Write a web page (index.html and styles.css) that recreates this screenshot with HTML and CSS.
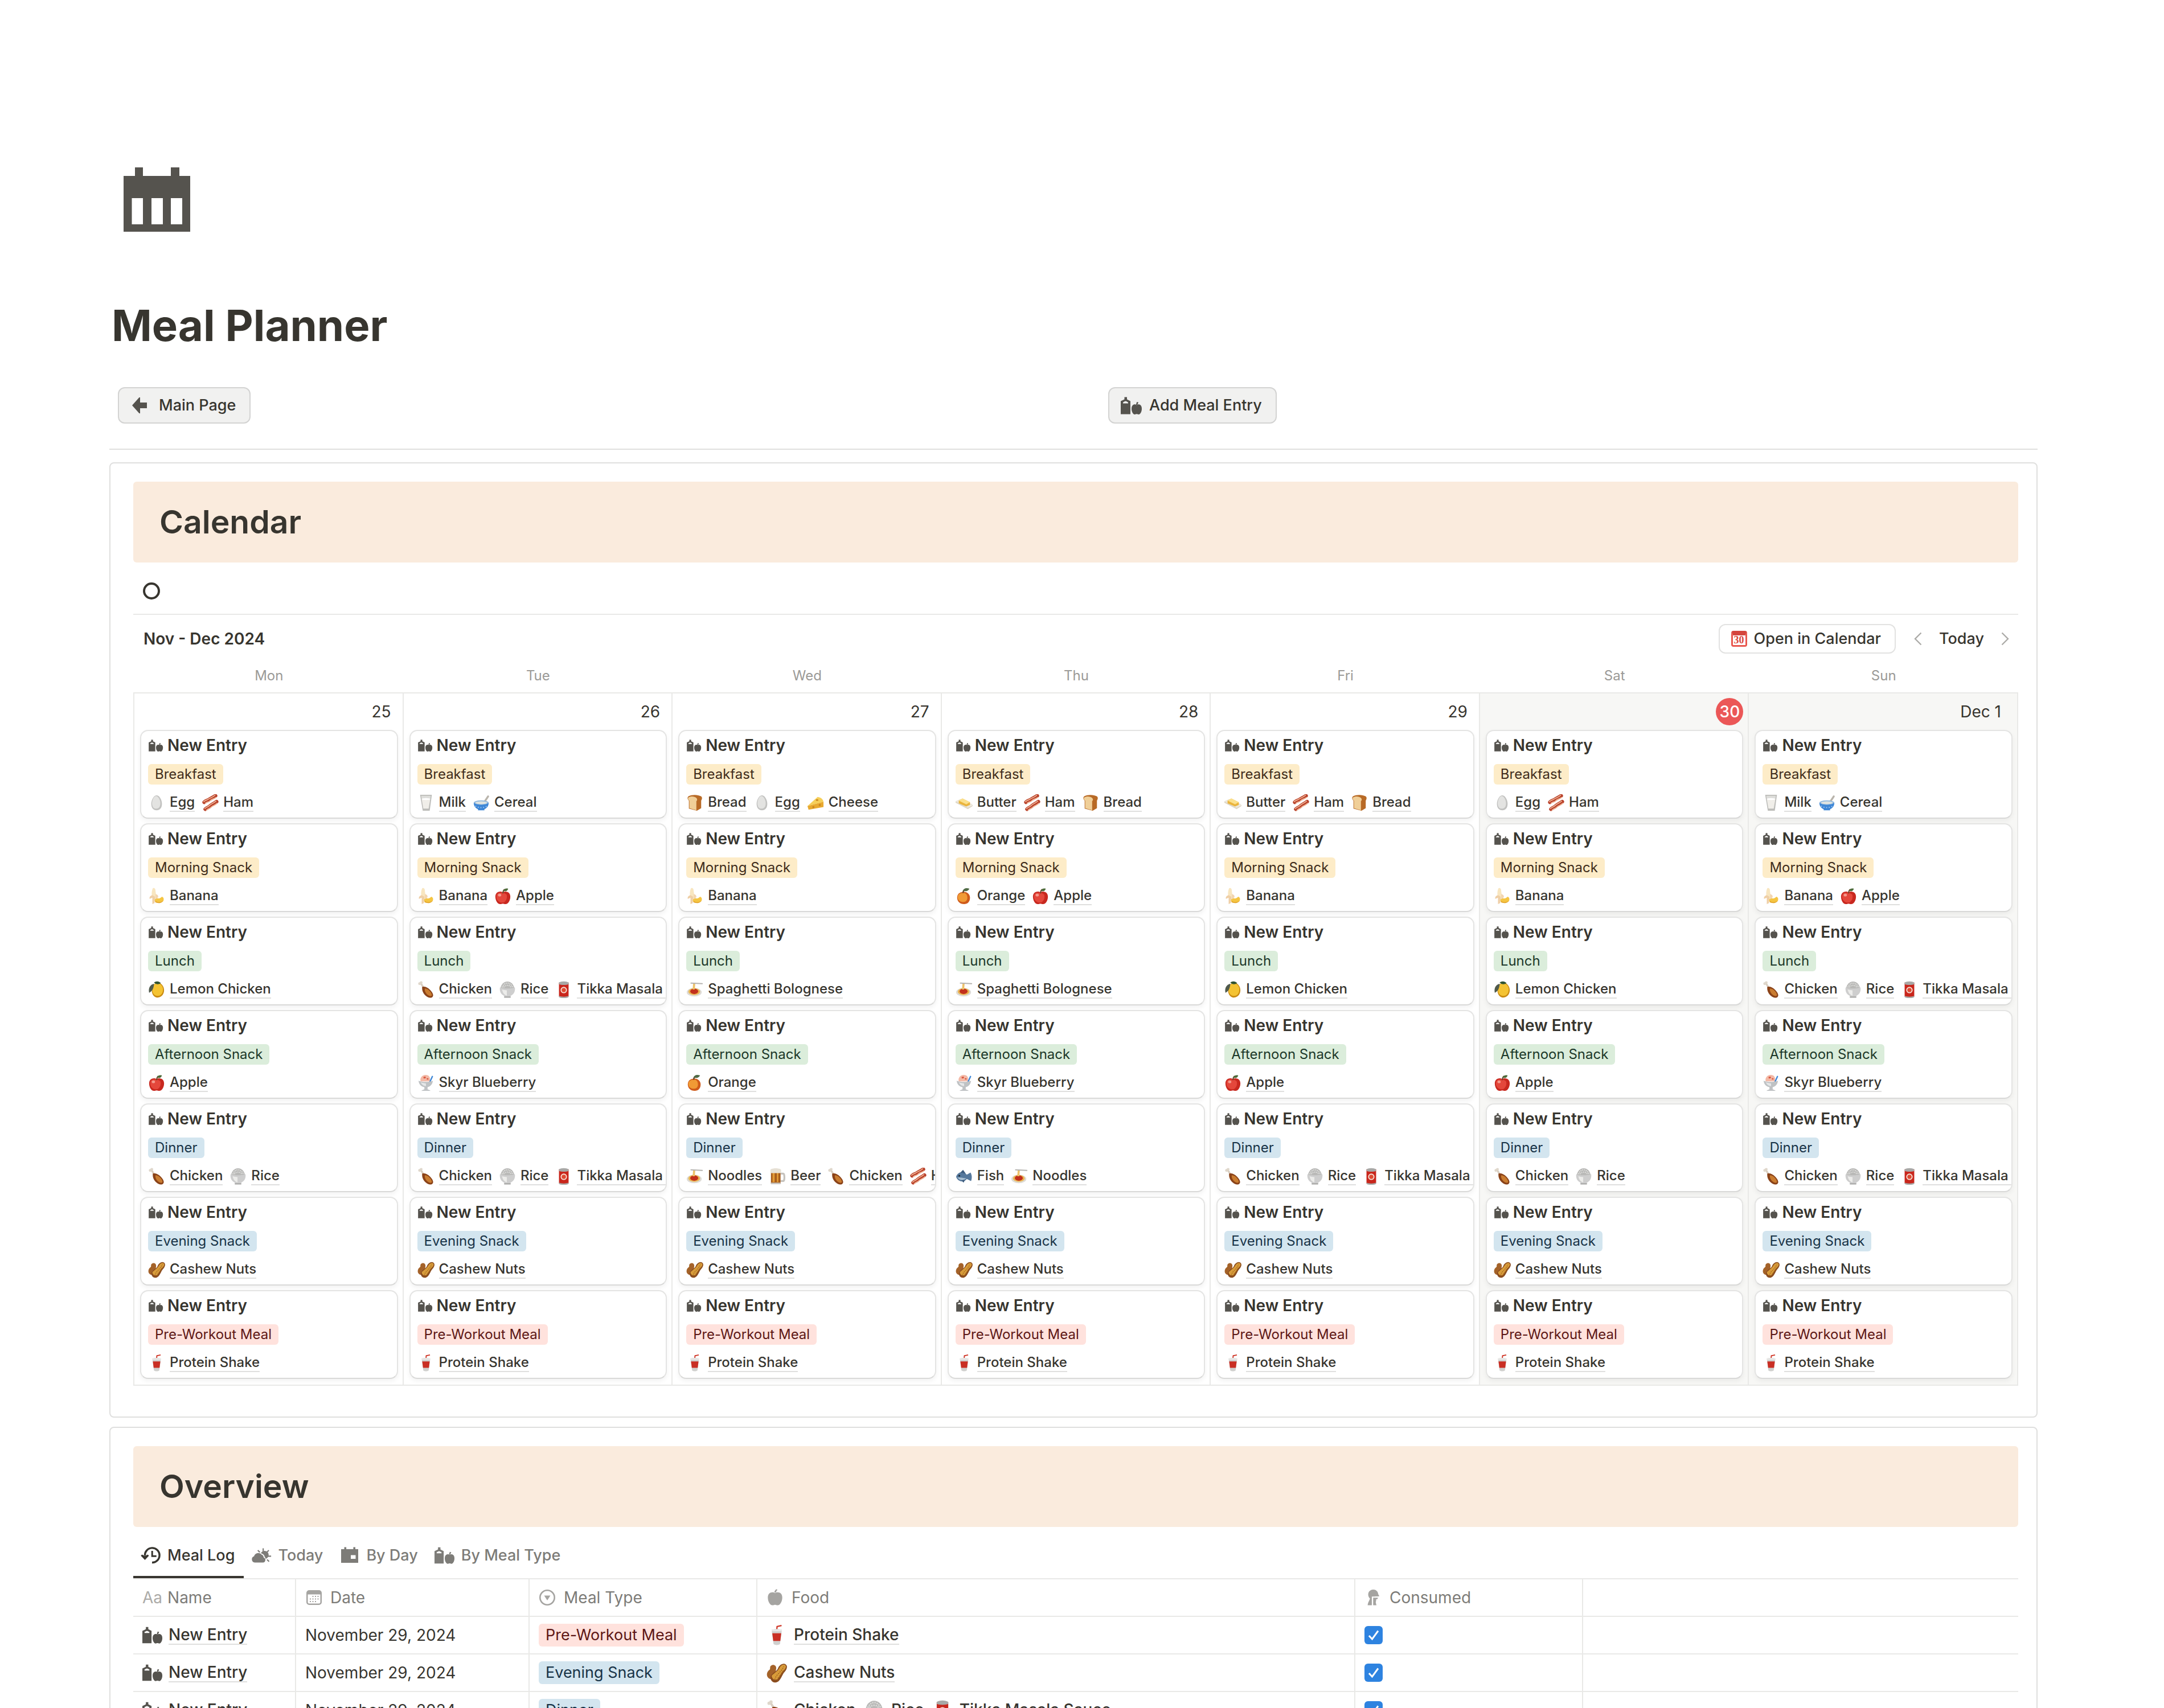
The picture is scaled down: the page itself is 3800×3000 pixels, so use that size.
FILE: index.html
```html
<!DOCTYPE html>
<html lang="en">
<head>
<meta charset="utf-8">
<title>Meal Planner</title>
<link rel="stylesheet" href="styles.css">
</head>
<body>
<svg class="sprite" aria-hidden="true">
  <symbol id="meal" viewBox="0 0 38 31"><path fill="currentColor" fill-rule="evenodd" d="M6.500 0.500h4.500v4l6 3V30.500H0V7.500l6.500-3zM4 11.500h9V9.800L9.500 7.800h-2L4 9.800z"/><path fill="currentColor" d="M28 14.500c-2-1.500-3.600-1.400-5-.9-2.800 1-4 3.600-4 7.400 0 5.300 2.800 10 5.600 10 1.500 0 2.200-.7 3.400-.7s1.900.7 3.400.7C34.200 31 37 26.300 37 21c0-3.800-1.200-6.400-4-7.400-1.400-.5-3-.6-5 .9zM26.800 14l1.500-5 2.800.8L29 14z"/></symbol>
  <symbol id="apple-solid" viewBox="0 0 28 32"><path fill="currentColor" d="M14 7.500c-3-1.800-5.600-1.800-8-.9C2.200 8 .5 11.500.5 16c0 7 4 14.500 8.500 14.500 2.200 0 3-.8 5-.8s2.800.8 5 .8c4.500 0 8.500-7.500 8.500-14.500 0-4.500-1.700-8-5.500-9.400-2.400-.9-5-.9-8 .9zM12.600 6.500C13 3.500 14.400 1.300 16.800.2l1.800 1.700C16.800 3 16 4.500 15.800 6.500z"/></symbol>
  <symbol id="back" viewBox="0 0 30 28"><path fill="currentColor" d="M2 14L14.500 0H16v9h12v10H16v9h-1.500z"/></symbol>
  <symbol id="history" viewBox="0 0 36 30"><g fill="none" stroke="currentColor" stroke-width="3.400"><path d="M7.500 15.500A12.800 12.800 0 1 1 20 27.500"/><path stroke-width="3" d="M20.200 7v9.300h7.500"/></g><path fill="currentColor" d="M.3 15.500l2-2 5.200 2.500 5-2.500 2 2L7.500 23z"/></symbol>
  <symbol id="sun-cloud" viewBox="0 0 40 30"><path fill="currentColor" d="M7 29a6.300 6.300 0 0 1-1.300-12.200 8.500 8.500 0 0 1 15-3.200 6.200 6.200 0 0 1 3.700 5.700A5 5 0 0 1 23 29zM19 10.500a8 8 0 1 1 9.300 11.300 7 7 0 0 0-2-4.300c-.4-3-2.800-5.600-7.300-7z"/><path stroke="currentColor" stroke-width="2.400" d="M23.500 1v6M13 5l4 4M34.500 5l-4.500 4.500M33 16.500h6M31 23l4 4"/></symbol>
  <symbol id="day" viewBox="0 0 36 30"><path fill="currentColor" fill-rule="evenodd" d="M3 4h5.500V.5h3.600V4h12.300V.5H28V4h5v24H3zm17 10.500v6.500h8.500v-6.500z"/></symbol>
  <symbol id="date" viewBox="0 0 30 28"><path fill="currentColor" fill-rule="evenodd" d="M7 1h17a5 5 0 0 1 5 5v16a5 5 0 0 1-5 5H7a5 5 0 0 1-5-5V6a5 5 0 0 1 5-5zM4.500 8.500V22A2.500 2.500 0 0 0 7 24.500h17a2.500 2.500 0 0 0 2.500-2.500V8.500z"/><path stroke="currentColor" stroke-width="2" stroke-dasharray="2 2.500" d="M12.500 12h12M8 16.500h16.500M8 21h11.500"/></symbol>
  <symbol id="select" viewBox="0 0 30 28"><circle cx="15" cy="14" r="12.700" fill="none" stroke="currentColor" stroke-width="2.600"/><path fill="currentColor" d="M9.500 10.500h11L15 19z"/></symbol>
  <symbol id="person" viewBox="0 0 32 32"><path fill="currentColor" d="M16.500 1C10.500 1 7 5.400 7 10.300c0 3 1.200 5.300 3.200 7.300C10 21.500 6.500 24 6 30.500h7.800V14.200c1.700-.2 4.500-.2 11.400-.4l2.800-.4-2.200-3.600C25.500 5 22 1 16.500 1z"/><path fill="currentColor" d="M16.300 16.300h9l-.8 2.300-2.700.8v3c-1.500 2.600.2 5 .7 8.100h-6.200z"/></symbol>

  <symbol id="egg" viewBox="0 0 32 32"><path fill="#c2c2c0" d="M16 2c5 0 10 8 10 16 0 7.500-4 12-10 12S6 25.500 6 18C6 10 11 2 16 2z"/><path fill="#e3e3e1" d="M15 3.500c4 0 8 7 8 13.500S20 27 15 27s-7.500-4-7.500-10S11 3.500 15 3.500z"/></symbol>
  <symbol id="bacon" viewBox="0 0 32 32"><g fill="none" stroke-linecap="round"><path stroke="#b8402a" stroke-width="7" d="M5 15c4-4 5-2 9-5s6-3 12-7"/><path stroke="#f0b596" stroke-width="1.800" d="M4 14c4-4 5-2 9-5s6-2 12-7M7 17c4-4 5-1 9-5s6-2 11-6"/><path stroke="#b8402a" stroke-width="7" d="M7 28c4-4 5-2 9-6s6-3 12-8"/><path stroke="#f0b596" stroke-width="1.800" d="M6 27c4-4 5-2 9-6s6-3 12-8M9 30c4-4 5-2 9-6s6-2 11-7"/></g></symbol>
  <symbol id="banana" viewBox="0 0 32 32"><path fill="#f5c542" d="M14 17c4 5 8 4 12 0 3 1 4 4 3 7-3 5-12 6-17 1z"/><path fill="#e3a52c" d="M14 25c5 4 12 2 15-1-2 5-10 7-16 3z"/><path fill="#f8e6c0" d="M9 1c4-1 5 2 5 6l2 13-6 3C6 16 6 7 9 1z"/><path fill="#efcfa6" d="M8 14c-4 1-6 4-5 7l5-2v12l4-2 1-12z"/><path fill="#f2d5b0" d="M14 12c4 1 5 3 5 6l-5 4z"/></symbol>
  <symbol id="apple" viewBox="0 0 32 32"><path fill="#c8281f" d="M16 9c-3-2-6-2-8-1-4 1-6 5-6 9 0 7 4 14 9 14 2 0 3-1 5-1s3 1 5 1c5 0 9-7 9-14 0-4-2-8-6-9-2-1-5-1-8 1z"/><path fill="#e4473b" d="M8 10c4-1 12 0 15 3 2 6-1 13-6 15-7 1-13-4-13-11 0-4 1-6 4-7z"/><ellipse cx="10" cy="14" rx="3" ry="2.500" fill="#f49a8c"/><path fill="none" stroke="#6b4226" stroke-width="2" d="M16 11c0-4 1-6 3-8"/><path fill="#4c6b3a" d="M17 6c1-4 5-5 9-4-1 4-5 6-9 4z"/></symbol>
  <symbol id="lemon" viewBox="0 0 32 32"><path fill="#c98a12" d="M15 4c8-3 15 5 15 13 0 7-4 13-11 14-6 1-12-5-12-13 0-6 3-12 8-14z"/><path fill="#f4c332" d="M15 5c7-2 13 4 13 11s-4 12-10 12S8 23 8 17c0-6 2-10 7-12z"/><path fill="#505a4c" d="M11 5C4 7 0 13 2 22c5-2 9-8 9-17z"/><path fill="#2f5230" d="M11 3c4-3 9-3 13 1-4 3-9 3-13-1z"/></symbol>
  <symbol id="chicken" viewBox="0 0 32 32"><path fill="none" stroke="#d9cfc2" stroke-width="3.500" stroke-linecap="round" d="M6 4l6 9"/><circle cx="4" cy="5" r="2.600" fill="#dfd7cb"/><circle cx="7" cy="3" r="2.600" fill="#dfd7cb"/><path fill="#8a4218" d="M9 11c5-1 10 1 15 6s7 10 4 13c-3 3-9 1-12-2-5-4-8-10-7-17z"/><path fill="#c97c30" d="M14 14c4 0 8 3 10 6 3 4 4 7 2 8s-7-1-9-4-4-6-3-10z"/></symbol>
  <symbol id="rice" viewBox="0 0 32 32"><path fill="#b9b9b7" d="M3 16C3 7 9 1 16 1s13 6 13 15z"/><path fill="none" stroke="#dededc" stroke-width="2.200" stroke-dasharray="2 1.500" d="M6 12c3-6 6-8 10-8s8 3 10 8M9 12c3-5 11-5 14 0"/><path fill="#cecece" d="M2 12c7 3 21 3 28 0 1 8-2 13-8 16v3H10v-3C4 25 1 20 2 12z"/><path fill="#ececea" d="M6 16c3 1 6 1.500 9 1.500v10C10 26 7 22 6 16z"/><path fill="#a9a9a7" d="M10 29h12v2.500H10z"/></symbol>
  <symbol id="can" viewBox="0 0 32 32"><path fill="#c9261c" d="M7 3h18v26c-4 3-14 3-18 0z"/><path fill="#a8a8a6" d="M7 3c4-3 14-3 18 0v3c-4 2-14 2-18 0zM7 28c4 2 14 2 18 0v2c-4 3-14 3-18 0z"/><circle cx="16" cy="17" r="6" fill="#f6e3d8"/><circle cx="16" cy="17" r="4" fill="#dd4a32"/></symbol>
  <symbol id="milk" viewBox="0 0 32 32"><path fill="#bcbcb9" d="M5 1h22l-4 30H10z"/><path fill="#dededb" d="M7 3h18l-1 6H8z"/><path fill="#f0eee9" d="M8 9h16l-3 18H11z"/><ellipse cx="16" cy="9" rx="8" ry="1.800" fill="#fff"/></symbol>
  <symbol id="cereal" viewBox="0 0 32 32"><path stroke="#b9b4ab" stroke-width="3.500" stroke-linecap="round" d="M29 4l-8 12"/><ellipse cx="16" cy="16" rx="14" ry="4.500" fill="#8fb7dd"/><ellipse cx="16" cy="16" rx="11" ry="2.800" fill="#dfe3e0"/><path fill="#3d86d6" d="M2 16c5 5 23 5 28 0 0 6-3 10-8 12v2H10v-2C5 26 2 22 2 16z"/><path stroke="#9cc4ee" stroke-width="2" stroke-dasharray="2 3" fill="none" d="M5 22c6 4 16 4 22 0"/></symbol>
  <symbol id="bread" viewBox="0 0 32 32"><path fill="#b86a26" d="M4 4c8-4 18-3 24 0 3 3 1 6 0 8v14l-8 5L5 27V12C2 9 2 6 4 4z"/><path fill="#f0cf98" d="M4 6c5-3 12-2 15 1 2 2 2 5 0 6v17L6 26V12C3 10 3 8 4 6z"/></symbol>
  <symbol id="cheese" viewBox="0 0 32 32"><path fill="#f6cf58" d="M1 22L20 5c6 1 10 4 11 9z"/><path fill="#e8a92f" d="M1 22l30-8v10L3 29z"/><g fill="#c98620"><ellipse cx="19" cy="11" rx="2.500" ry="1.600"/><circle cx="12" cy="24" r="2"/><circle cx="24" cy="20" r="2"/></g></symbol>
  <symbol id="butter" viewBox="0 0 32 32"><path fill="#ded7c7" d="M0 13l23 12 9-5v2l-9 6L0 16z"/><path fill="#ece7db" d="M0 13l9-4 23 10-9 6z"/><path fill="#eab43c" d="M6 12l7-4 14 7v5l-7 3-14-6z"/><path fill="#fbe08c" d="M6 12l7-4 14 7-7 4z"/></symbol>
  <symbol id="orange" viewBox="0 0 32 32"><path fill="#cf5b1a" d="M14 8c7-1 13 4 13 11 0 8-5 12-11 12C8 31 3 26 3 19S7 9 14 8z"/><path fill="#f09a35" d="M13 10c6-1 9 3 9 9 0 5-3 8-7 8-7 0-11-4-11-9s4-8 9-8z"/><path fill="none" stroke="#6b4226" stroke-width="2.500" d="M14 10c0-3 1-5 3-6"/><path fill="#4f6a45" d="M14 6c1-5 6-6 12-4-2 4-7 6-12 4z"/></symbol>
  <symbol id="spaghetti" viewBox="0 0 32 32"><ellipse cx="15" cy="21" rx="14" ry="8" fill="#dedbd5"/><ellipse cx="15" cy="20" rx="11" ry="6.500" fill="#eab652"/><ellipse cx="15" cy="19.500" rx="7.500" ry="5" fill="#c2301c"/><path fill="#edc26a" d="M13 4h4l-1 12h-4z"/><path stroke="#b5b3af" stroke-width="2.200" stroke-linecap="round" d="M9 4l21 1"/></symbol>
  <symbol id="sundae" viewBox="0 0 32 32"><path fill="#f3b9a6" d="M6 13C4 7 9 1 15 1c7 0 10 5 8 12z"/><path fill="#d9573f" d="M11 5l4-1 1 3-4 1zM18 7l3 1-1 2-3-1z"/><path stroke="#3f87d6" stroke-width="2.500" stroke-linecap="round" d="M28 4l-5 11"/><path fill="#bfc2c4" d="M2 12c8 3 19 3 27 0-1 7-5 11-10 12v4l5 2v1H8v-1l5-2v-4C7 23 3 19 2 12z"/><path fill="#e4e6e7" d="M6 15c4 1 8 2 10 2v5c-5 0-8-3-10-7z"/></symbol>
  <symbol id="beer" viewBox="0 0 32 32"><path fill="none" stroke="#c5c2bd" stroke-width="3.500" d="M22 11h5c3 0 3 14 0 14h-5"/><path fill="#a65c1b" d="M4 7h18v23H4z"/><path fill="#e29a35" d="M7 9h4v18H7zM15 9h3v18h-3z"/><path fill="#e6e0d4" d="M3 4c2-4 18-4 20 0v6H3z"/><path fill="#c9c6c1" d="M4 28h18v3H4z"/></symbol>
  <symbol id="fish" viewBox="0 0 32 32"><path fill="#55789c" d="M1 17C4 8 14 5 21 13l7-4c3 5 3 11 1 16l-8-4C15 29 4 26 1 17z"/><path fill="#a9c0d3" d="M3 18c5 6 12 7 17 2-6-1-11-2-17-2z"/><path fill="#3c5c7e" d="M9 9l5-5 5 7zM11 24l4 4 3-6z"/><circle cx="7" cy="15" r="1.800" fill="#1f2b38"/></symbol>
  <symbol id="peanuts" viewBox="0 0 32 32"><path fill="#a4622a" d="M7 5c4-3 9 0 8 5s0 7 0 11-6 7-11 4-4-10 0-13 0-5 3-7z"/><path fill="#8a4c1e" d="M9 18c3-4 7-4 9-9s8-9 12-6 1 9-2 12-4 8-8 13-11 4-13-1 0-7 2-9z"/><path fill="#d89c3a" d="M11 18c3-3 7-5 9-9s6-7 9-5 0 7-3 9-4 7-7 11-8 4-10 0 0-4 2-6z"/><path fill="none" stroke="#a0631d" stroke-width="1.300" stroke-dasharray="2 1.500" d="M13 27c1-8 10-11 14-21M17 28c1-7 8-10 11-17M6 8c2 5-3 8-2 13"/></symbol>
  <symbol id="cup" viewBox="0 0 32 32"><path fill="none" stroke="#cf3526" stroke-width="2" d="M16 8l.5-5.500 7-1.500"/><path fill="#d0d0ce" d="M8 8c4-2 12-2 16 0l-3 22c-3 2-7 2-10 0z"/><path fill="#c92f24" d="M9 13h14l-1.500 12h-11z"/><path fill="#e9e9e8" d="M8 7h16v3H8z"/></symbol>
</svg>

<main class="page">
  <svg class="page-icon" viewBox="0 0 117 113" aria-hidden="true"><path fill="currentColor" fill-rule="evenodd" d="M20 0h14v15h49V0h15v15h19v98H0V15h20zM14.500 54v46H34V54zm34.500 0v46h20V54zm34 0v46h20V54z"/></svg>
  <h1>Meal Planner</h1>
  <div class="actions">
    <div><button class="action" type="button"><svg class="ico-back"><use href="#back"/></svg>Main Page</button></div>
    <div><button class="action" type="button"><svg class="ico-meal"><use href="#meal"/></svg>Add Meal Entry</button></div>
  </div>
  <hr>

  <section class="block">
    <h2>Calendar</h2>
    <div class="view-row">
      <button class="view-dot" type="button" aria-label="Calendar view"></button>
    </div>
    <div class="toolbar">
      <strong>Nov - Dec 2024</strong>
      <div class="toolbar-right">
        <button class="open-calendar" type="button"><span class="mini-calendar">30</span>Open in Calendar</button>
        <button class="nav" type="button" aria-label="Previous"><svg viewBox="0 0 14 24"><path d="M12.500 1.500L2 12l10.500 10.500"/></svg></button>
        <button class="today" type="button">Today</button>
        <button class="nav" type="button" aria-label="Next"><svg viewBox="0 0 14 24"><path d="M1.500 1.500L12 12 1.500 22.500"/></svg></button>
      </div>
    </div>
    <div class="weekdays"><span>Mon</span><span>Tue</span><span>Wed</span><span>Thu</span><span>Fri</span><span>Sat</span><span>Sun</span></div>
    <div class="week" id="week"></div>
  </section>

  <section class="block">
    <h2>Overview</h2>
    <div class="tabs">
      <button class="tab active" type="button"><svg><use href="#history"/></svg>Meal Log</button>
      <button class="tab" type="button"><svg><use href="#sun-cloud"/></svg>Today</button>
      <button class="tab" type="button"><svg><use href="#day"/></svg>By Day</button>
      <button class="tab" type="button"><svg><use href="#meal"/></svg>By Meal Type</button>
    </div>
    <table class="log">
      <colgroup><col class="c-name"><col class="c-date"><col class="c-type"><col class="c-food"><col class="c-done"><col></colgroup>
      <thead>
        <tr>
          <th><div class="head head-name"><span class="aa">Aa</span>Name</div></th>
          <th><div class="head"><svg><use href="#date"/></svg>Date</div></th>
          <th><div class="head"><svg><use href="#select"/></svg>Meal Type</div></th>
          <th><div class="head"><svg><use href="#apple-solid"/></svg>Food</div></th>
          <th><div class="head"><svg><use href="#person"/></svg>Consumed</div></th>
          <th></th>
        </tr>
      </thead>
      <tbody id="log"></tbody>
    </table>
  </section>
</main>
<script src="app.js"></script>
</body>
</html>
```
FILE: styles.css
```css
* { box-sizing: border-box; }

body {
  margin: 0;
  background: #fff;
  color: #37352f;
  font: 400 28px/36px Inter, "Liberation Sans", sans-serif;
}

button {
  font: inherit;
  color: inherit;
  border: 0;
  padding: 0;
  background: none;
  white-space: nowrap;
}

svg { display: block; flex: none; }

.sprite { position: absolute; width: 0; height: 0; }

.page {
  height: 100vh;
  overflow-y: auto;
  scrollbar-width: none;
  padding: 294px 222px 0 192px;
}

.page-icon { width: 117px; height: 113px; margin-left: 25px; color: #55534e; }

h1 { margin: 116px 0 0 4px; font-size: 76px; line-height: 96px; font-weight: 700; }

.actions {
  display: grid;
  grid-template-columns: 1fr 1fr;
  gap: 92px;
  padding: 61px 0 44px;
}
.actions > div { padding-left: 15px; }

.action {
  display: flex;
  align-items: center;
  height: 64px;
  padding: 0 24px 0 20px;
  border: 2px solid #d3d3d2;
  border-radius: 12px;
  background: #f1f1f0;
  font-weight: 500;
}
.action svg { color: #55534e; }
.ico-back { width: 32px; height: 28px; margin-right: 18px; }
.ico-meal { width: 38px; height: 31px; margin-right: 12px; }

hr { height: 2px; margin: 0 0 22px; border: 0; background: #dfdfde; }

.block {
  margin-bottom: 16px;
  padding: 32px 32px 54px 40px;
  border: 2px solid #dfdfde;
  border-radius: 8px;
}

h2 {
  margin: 0;
  padding: 32px 46px;
  border-radius: 6px;
  background: #faebdd;
  font-size: 57px;
  line-height: 78px;
  font-weight: 600;
}

.view-row {
  display: flex;
  padding: 35px 17px 25px;
  border-bottom: 2px solid #e9e9e7;
}
.view-dot { width: 30px; height: 30px; border: 4px solid #37352f; border-radius: 50%; }

.toolbar {
  display: flex;
  align-items: center;
  justify-content: space-between;
  padding: 16px 16px 0 18px;
}
.toolbar strong { font-weight: 600; }
.toolbar-right { display: flex; align-items: center; font-weight: 500; }
.open-calendar {
  display: flex;
  align-items: center;
  gap: 12px;
  height: 52px;
  margin-right: 32px;
  padding: 0 24px 0 20px;
  border: 2px solid #e2e2e1;
  border-radius: 12px;
}
.mini-calendar {
  display: flex;
  justify-content: center;
  width: 28px;
  height: 28px;
  border: solid #e9574e;
  border-width: 8px 3px 3px;
  border-top-color: #d4453d;
  border-radius: 4px;
  color: #d9483f;
  font: 700 18px/17px "Liberation Serif", serif;
}
.action, .toolbar-right, .tab { font-size: 27px; }
.today { margin: 0 30px; }
.nav svg { width: 14px; height: 24px; fill: none; stroke: #acaba8; stroke-width: 2.4; }

.weekdays {
  display: grid;
  grid-template-columns: repeat(7, 1fr);
  padding: 23px 0 13px 2px;
  color: #9b9a97;
  font-size: 24px;
  line-height: 32px;
  text-align: center;
}

.week {
  display: grid;
  grid-template-columns: repeat(7, minmax(0, 1fr));
  border: solid #e9e9e7;
  border-width: 2px 0 2px 2px;
}

.day {
  display: flex;
  flex-direction: column;
  gap: 8px;
  padding: 0 8px 10px 10px;
  border-right: 2px solid #e9e9e7;
}
.day.weekend { background: #f7f7f5; }

.day-number {
  display: flex;
  align-items: center;
  justify-content: flex-end;
  height: 56px;
  padding: 8px 12px 0 0;
}
.day-number.wide { padding-right: 20px; }
.day-number.current { padding-right: 0; }
.day-number.current span {
  width: 48px;
  border-radius: 24px;
  background: #eb5757;
  color: #fff;
  font-weight: 500;
  line-height: 48px;
  text-align: center;
}

.entry {
  padding: 8px 12px;
  overflow: hidden;
  border: 2px solid #e4e4e3;
  border-bottom-color: #d9d9d8;
  border-radius: 14px;
  background: #fff;
  box-shadow: 0 4px 8px rgba(15, 15, 15, .05);
}
.entry-title {
  display: flex;
  align-items: center;
  gap: 7px;
  height: 34px;
  margin: 0 0 16px;
  padding-left: 1px;
  font-size: 28px;
  line-height: 34px;
  font-weight: 600;
}
.entry-title svg { width: 26px; height: 21px; color: #55534e; }

.tag {
  display: inline-block;
  padding: 0 12px;
  border-radius: 6px;
  white-space: nowrap;
}
.entry .tag { display: block; width: max-content; margin-bottom: 14px; font-size: 24px; line-height: 36px; }
.yellow { background: #fdecc8; color: #402c1b; }
.green { background: #dbeddb; color: #1c3829; }
.blue { background: #d3e5ef; color: #183347; }
.red { background: #ffe2dd; color: #5d1715; }

.foods { display: flex; gap: 12px; min-height: 36px; font-weight: 500; white-space: nowrap; }
.food { display: flex; flex: none; align-items: center; gap: 8px; color: inherit; text-decoration: none; }
.food svg { width: 30px; height: 30px; }
.underlined { border-bottom: 2px solid #dfdfde; }
.entry .foods { height: 36px; font-size: 24px; }
.entry .underlined { line-height: 30px; }

.tabs { display: flex; border-bottom: 2px solid #e9e9e7; }
.tab {
  display: flex;
  align-items: center;
  gap: 11px;
  height: 90px;
  padding: 18px 16px 4px 13px;
  border-bottom: 4px solid transparent;
  color: #7d7c78;
  font-weight: 500;
}
.tab svg { width: 36px; height: 30px; }
.tab.active { border-color: #37352f; color: #37352f; }

.log { width: 100%; table-layout: fixed; border-collapse: separate; border-spacing: 0; }
.c-name { width: 286px; }
.c-date { width: 410px; }
.c-type, .c-done { width: 400px; }
.c-food { width: 1050px; }
.log th, .log td {
  height: 66px;
  padding: 0 16px;
  border: solid #e9e9e7;
  border-width: 0 2px 2px 0;
  text-align: left;
  vertical-align: middle;
  white-space: nowrap;
}
.log th:last-child, .log td:last-child { border-right: 0; }
.head { display: flex; align-items: center; gap: 14px; color: #7d7c78; font-weight: 400; }
.head svg { width: 30px; height: 30px; color: #a5a4a1; }
.head-name { gap: 9px; }
.aa { color: #acaba8; }
.log .foods { gap: 14px; }
.log .food { gap: 12px; }
.log .food svg { width: 36px; height: 36px; }
.log .name { gap: 10px; }
.log .name svg { height: 30px; color: #55534e; }
.log .underlined { line-height: 32px; }
.log .tag { font-size: 27px; line-height: 40px; vertical-align: middle; }

.check-box { display: grid; width: 32px; }
.check-box > * { grid-area: 1 / 1; }
.check-box svg { width: 32px; height: 32px; fill: none; stroke: #fff; stroke-width: 3; z-index: 1; pointer-events: none; }
.check {
  width: 32px;
  height: 32px;
  margin: 0;
  appearance: none;
  border-radius: 6px;
  background: #2e83e0;
}
```
FILE: app.js
```js
const FOOD_ICONS = {
  "Egg": "egg", "Ham": "bacon", "Banana": "banana", "Apple": "apple",
  "Lemon Chicken": "lemon", "Chicken": "chicken", "Rice": "rice",
  "Tikka Masala Sauce": "can", "Milk": "milk", "Cereal": "cereal",
  "Bread": "bread", "Cheese": "cheese", "Butter": "butter", "Orange": "orange",
  "Spaghetti Bolognese": "spaghetti", "Noodles": "spaghetti",
  "Skyr Blueberry": "sundae", "Beer": "beer", "Fish": "fish",
  "Cashew Nuts": "peanuts", "Protein Shake": "cup"
};

const MEALS = [
  ["Breakfast", "yellow"], ["Morning Snack", "yellow"], ["Lunch", "green"],
  ["Afternoon Snack", "green"], ["Dinner", "blue"], ["Evening Snack", "blue"],
  ["Pre-Workout Meal", "red"]
];

const CURRY = ["Chicken", "Rice", "Tikka Masala Sauce"];

const WEEK = [
  { label: "25", meals: [["Egg", "Ham"], ["Banana"], ["Lemon Chicken"], ["Apple"], ["Chicken", "Rice"]] },
  { label: "26", meals: [["Milk", "Cereal"], ["Banana", "Apple"], CURRY, ["Skyr Blueberry"], CURRY] },
  { label: "27", meals: [["Bread", "Egg", "Cheese"], ["Banana"], ["Spaghetti Bolognese"], ["Orange"], ["Noodles", "Beer", "Chicken", "Ham"]] },
  { label: "28", meals: [["Butter", "Ham", "Bread"], ["Orange", "Apple"], ["Spaghetti Bolognese"], ["Skyr Blueberry"], ["Fish", "Noodles"]] },
  { label: "29", meals: [["Butter", "Ham", "Bread"], ["Banana"], ["Lemon Chicken"], ["Apple"], CURRY] },
  { label: "30", kind: "current", weekend: true, meals: [["Egg", "Ham"], ["Banana"], ["Lemon Chicken"], ["Apple"], ["Chicken", "Rice"]] },
  { label: "Dec 1", kind: "wide", weekend: true, meals: [["Milk", "Cereal"], ["Banana", "Apple"], CURRY, ["Skyr Blueberry"], CURRY] }
];

const LOG = [
  [6, ["Protein Shake"]],
  [5, ["Cashew Nuts"]],
  [4, CURRY]
];

const icon = id => `<svg aria-hidden="true"><use href="#${id}"/></svg>`;
const tag = ([name, color]) => `<span class="tag ${color}">${name}</span>`;
const food = name => `<a class="food" href="#">${icon(FOOD_ICONS[name])}<span class="underlined">${name}</span></a>`;
const foods = list => `<div class="foods">${list.map(food).join("")}</div>`;

const entry = (list, i) => `<article class="entry">
  <h3 class="entry-title">${icon("meal")}New Entry</h3>${tag(MEALS[i])}${foods(list)}
</article>`;

document.getElementById("week").innerHTML = WEEK.map(day => `
  <div class="day ${day.weekend ? "weekend" : ""}">
    <div class="day-number ${day.kind || ""}"><span>${day.label}</span></div>
    ${[...day.meals, ["Cashew Nuts"], ["Protein Shake"]].map(entry).join("")}
  </div>`).join("");

document.getElementById("log").innerHTML = LOG.map(([meal, list]) => `
  <tr>
    <td><div class="foods"><a class="food name" href="#">${icon("meal")}<span class="underlined">New Entry</span></a></div></td>
    <td>November 29, 2024</td>
    <td>${tag(MEALS[meal])}</td>
    <td>${foods(list)}</td>
    <td><label class="check-box"><input class="check" type="checkbox" checked aria-label="Consumed"><svg viewBox="0 0 32 32"><path d="M8 17l5.500 6L24 8.500"/></svg></label></td>
    <td></td>
  </tr>`).join("");
```
